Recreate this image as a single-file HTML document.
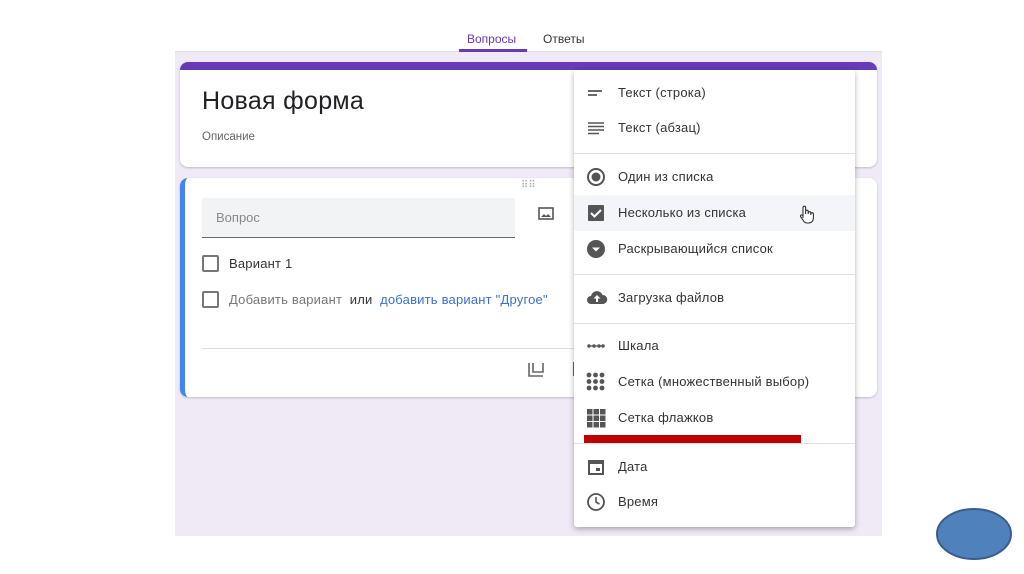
<!DOCTYPE html>
<html><head><meta charset="utf-8"><style>
*{margin:0;padding:0;box-sizing:border-box}
body{width:1024px;height:574px;background:#fff;position:relative;overflow:hidden;font-family:"Liberation Sans",sans-serif;color:#202124}
.a{position:absolute}
.bg{left:175px;top:52px;width:707px;height:484px;background:#efeaf6}
.tabs{left:175px;top:0;width:707px;height:52px;background:#fff;border-bottom:1px solid #e0e0e0}
.card{background:#fff;border-radius:8px;box-shadow:0 1px 2px rgba(0,0,0,.2)}
.mi{position:absolute;left:0;width:281px;height:36px;font-size:13px;color:#333;letter-spacing:.2px}
.mi span{position:absolute;left:44px;top:10px}
.mi svg{position:absolute;left:12px;top:8px}
.sep{position:absolute;left:0;width:281px;height:1px;background:#e0e0e0}
.cb{position:absolute;width:17px;height:17px;border:2px solid #777;border-radius:2px}
</style></head><body>
<div class="a bg"></div>
<div class="a tabs">
<div class="a" style="left:292px;top:32px;font-size:12px;color:#673ab7">Вопросы</div>
<div class="a" style="left:284px;top:49px;width:68px;height:3px;background:#673ab7"></div>
<div class="a" style="left:368px;top:32px;font-size:12px;color:#333">Ответы</div>
</div>
<div class="a card" style="left:180px;top:62px;width:697px;height:105px;border-top:8px solid #673ab7">
<div class="a" style="left:22px;top:17px;font-size:25px;color:#202124;letter-spacing:.3px">Новая форма</div>
<div class="a" style="left:22px;top:61px;font-size:11.5px;color:#666">Описание</div>
</div>
<div class="a card" style="left:180px;top:178px;width:697px;height:219px;border-left:5px solid #4285f4">
<div class="a" style="left:336px;top:2px;font-size:10px;color:#aaa;letter-spacing:0">⠿⠿</div>
<div class="a" style="left:17px;top:20px;width:313px;height:40px;background:#f1f3f4;border-bottom:1px solid #666"><span class="a" style="left:14px;top:12px;font-size:13px;color:#888">Вопрос</span></div>
<svg class="a" style="left:352px;top:28px" width="18" height="16"><rect x="2" y="2" width="14" height="11" fill="none" stroke="#555" stroke-width="1.6"/><path d="M4 11l3-3 2 2 2-2 3 3z" fill="#555"/></svg>
<div class="cb" style="left:17px;top:77px"></div>
<div class="a" style="left:44px;top:78px;font-size:13px;color:#333;letter-spacing:.2px">Вариант 1</div>
<div class="cb" style="left:17px;top:113px"></div>
<div class="a" style="left:44px;top:114px;font-size:13px;color:#777;letter-spacing:.2px">Добавить вариант <b style="color:#333;font-weight:normal">&nbsp;или&nbsp;</b> <span style="color:#3b6fd0">добавить вариант "Другое"</span></div>
<div class="a" style="left:17px;top:170px;width:380px;height:1px;background:#ddd"></div>
<svg class="a" style="left:341px;top:182px" width="20" height="20"><path d="M3 3v13h14M7 3v9h10V3" fill="none" stroke="#666" stroke-width="1.6"/></svg>
<div class="a" style="left:388px;top:184px;width:2px;height:14px;background:#666"></div>
</div>
<div class="a" style="left:574px;top:70px;width:281px;height:457px;background:#fff;box-shadow:0 2px 6px rgba(0,0,0,.3);border-radius:3px">
<div class="mi" style="top:5px"><svg width="20" height="20"><path d="M2 8h14M2 12h9" stroke="#555" stroke-width="1.8"/></svg><span>Текст (строка)</span></div>
<div class="mi" style="top:40px"><svg width="20" height="20"><path d="M2 5h16M2 8.5h16M2 12h16M2 15.5h11" stroke="#555" stroke-width="1.5"/></svg><span>Текст (абзац)</span></div>
<div class="sep" style="top:83px"></div>
<div class="mi" style="top:89px"><svg width="20" height="20"><circle cx="10" cy="10" r="8" fill="none" stroke="#555" stroke-width="2"/><circle cx="10" cy="10" r="4.5" fill="#555"/></svg><span>Один из списка</span></div>
<div class="mi" style="top:125px;background:#f3f5f9"><svg width="20" height="20"><rect x="2" y="2" width="16" height="16" rx="1" fill="#555"/><path d="M5 10l3.5 3.5L15 7" stroke="#fff" stroke-width="2" fill="none"/></svg><span>Несколько из списка</span>
<svg style="left:223px;top:9px" width="20" height="22"><path d="M6 14V3.5a1.3 1.3 0 0 1 2.6 0V10M8.6 9V7.5a1.3 1.3 0 0 1 2.6 0V10M11.2 9a1.3 1.3 0 0 1 2.6 0V11M13.8 10a1.3 1.3 0 0 1 2.6 0v4c0 3-2 5-5 5H10c-2 0-3-1-4-3L3.5 12.5a1.2 1.2 0 0 1 2-1.2L6 12" fill="#fff" stroke="#333" stroke-width="1.1"/></svg></div>
<div class="mi" style="top:161px"><svg width="20" height="20"><circle cx="10" cy="10" r="9" fill="#555"/><path d="M6 8.5h8L10 12.5z" fill="#fff"/></svg><span>Раскрывающийся список</span></div>
<div class="sep" style="top:204px"></div>
<div class="mi" style="top:210px"><svg width="22" height="20"><path d="M5 16a4 4 0 0 1 0-8 6 6 0 0 1 11.5-1A4.5 4.5 0 0 1 17 16z" fill="#555"/><path d="M11 7l-3.5 3.5H10V14h2v-3.5h2.5z" fill="#fff"/></svg><span>Загрузка файлов</span></div>
<div class="sep" style="top:253px"></div>
<div class="mi" style="top:258px"><svg width="20" height="20"><path d="M2 10h16" stroke="#555" stroke-width="1.2"/><circle cx="3" cy="10" r="1.8" fill="#555"/><circle cx="8" cy="10" r="1.8" fill="#555"/><circle cx="13" cy="10" r="1.8" fill="#555"/><circle cx="17" cy="10" r="1.8" fill="#555"/></svg><span>Шкала</span></div>
<div class="mi" style="top:294px"><svg width="22" height="22"><g fill="#555"><circle cx="3" cy="3" r="2.4"/><circle cx="9.5" cy="3" r="2.4"/><circle cx="16" cy="3" r="2.4"/><circle cx="3" cy="9.5" r="2.4"/><circle cx="9.5" cy="9.5" r="2.4"/><circle cx="16" cy="9.5" r="2.4"/><circle cx="3" cy="16" r="2.4"/><circle cx="9.5" cy="16" r="2.4"/><circle cx="16" cy="16" r="2.4"/></g></svg><span>Сетка (множественный выбор)</span></div>
<div class="mi" style="top:330px"><svg width="22" height="22"><g fill="#555"><rect x="1" y="1" width="5.5" height="5.5"/><rect x="7.5" y="1" width="5.5" height="5.5"/><rect x="14" y="1" width="5.5" height="5.5"/><rect x="1" y="7.5" width="5.5" height="5.5"/><rect x="7.5" y="7.5" width="5.5" height="5.5"/><rect x="14" y="7.5" width="5.5" height="5.5"/><rect x="1" y="14" width="5.5" height="5.5"/><rect x="7.5" y="14" width="5.5" height="5.5"/><rect x="14" y="14" width="5.5" height="5.5"/></g></svg><span>Сетка флажков</span></div>
<div class="a" style="left:10px;top:365px;width:217px;height:8px;background:#c00000"></div>
<div class="sep" style="top:373px"></div>
<div class="mi" style="top:379px"><svg width="20" height="20"><rect x="3" y="4" width="14" height="13" fill="none" stroke="#555" stroke-width="2"/><rect x="3" y="4" width="14" height="3" fill="#555"/><rect x="10" y="11" width="4" height="3" fill="#555"/></svg><span>Дата</span></div>
<div class="mi" style="top:414px"><svg width="20" height="20"><circle cx="10" cy="10" r="8" fill="none" stroke="#555" stroke-width="1.8"/><path d="M10 5v5l3.5 2" stroke="#555" stroke-width="1.6" fill="none"/></svg><span>Время</span></div>
</div>
<svg class="a" style="left:930px;top:504px" width="90" height="64"><ellipse cx="44" cy="30" rx="37" ry="25" fill="#4f81bd" stroke="#385d8a" stroke-width="2"/></svg>
</body></html>
